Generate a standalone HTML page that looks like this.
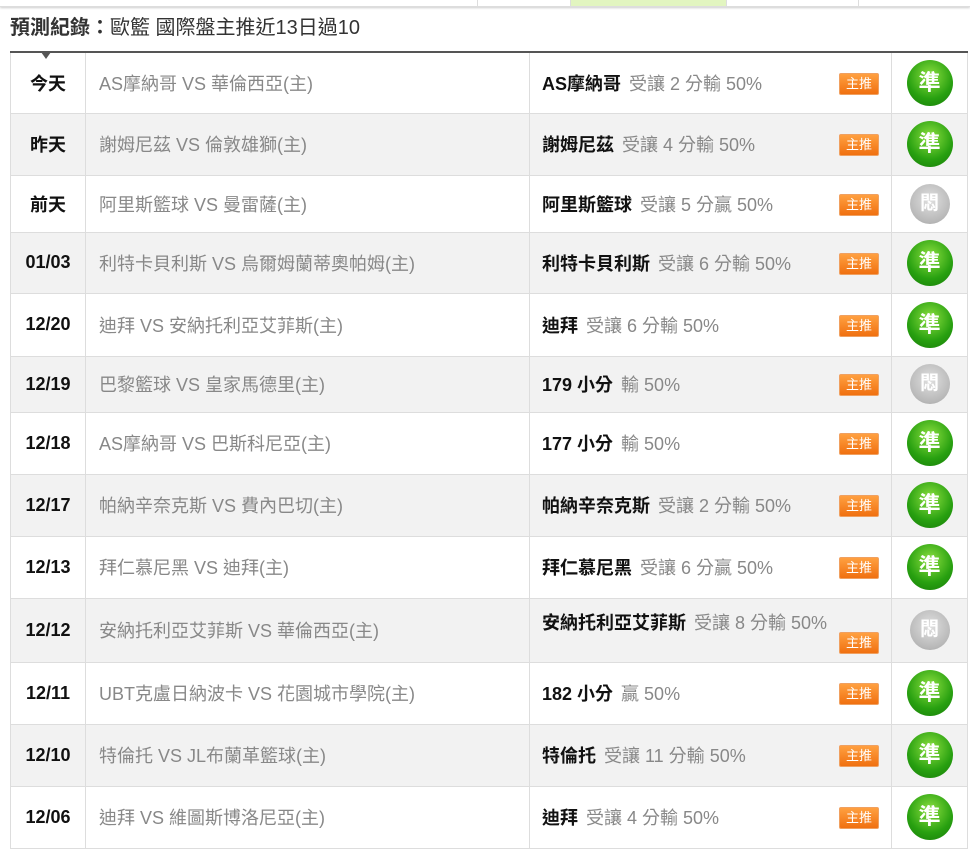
<html><head><style>
body{margin:0;width:970px;height:843px;overflow:hidden;background:#fff;font-family:"Liberation Sans","Noto Sans CJK TC",sans-serif;position:relative}
.top{position:absolute;top:0;left:0;width:970px;height:6px;border-bottom:1px solid #ddd;box-shadow:0 1px 2px #ccc}
.top i{position:absolute;top:0;height:6px;border-left:1px solid #ddd}
h1{position:absolute;left:10px;top:11px;margin:0;font-size:20px;font-weight:normal;color:#333}
h1 b{font-weight:bold}
table{position:absolute;left:10px;top:51px;width:958px;border-collapse:collapse;border-top:2px solid #555}
td{border:1px solid #ddd;padding:0;font-size:18px}
tr:nth-child(even) td{background:#f2f2f2}
td.d{width:74px;text-align:center;font-weight:bold;color:#111}
td.m{width:430px;padding-left:13px;color:#888}
td.p{width:349px;padding-left:12px;color:#888;position:relative}
td.p b{color:#111;margin-right:8px}
td.r{text-align:center}
.t{position:absolute;right:12px;top:50%;margin-top:-10px;width:38px;height:20px;background:linear-gradient(#ffa040,#f07010);border:1px solid #f0a060;border-radius:2px;color:#fff;font-size:13px;line-height:20px;text-align:center}
.g,.s{display:inline-block;border-radius:50%;color:#fff;font-weight:bold;vertical-align:middle}
.g{width:46px;height:46px;line-height:46px;font-size:22px;background:radial-gradient(circle at 50% 35%,#8de040,#28a010 60%,#167a08)}
.s{width:40px;height:40px;line-height:40px;font-size:19px;background:radial-gradient(circle at 50% 40%,#e0e0e0,#b8b8b8 70%,#999)}
.arr{position:absolute;left:41px;top:52px;border:5px solid transparent;border-top:7px solid #555}
</style></head><body>
<div class="top"><i style="left:477px"></i><i style="left:570px;width:155px;background:#e2f5c0;border-right:1px solid #ddd"></i><i style="left:858px"></i></div>
<h1><b>預測紀錄：</b>歐籃 國際盤主推近13日過10</h1>
<table>
<tr style="height:61px"><td class="d">今天</td><td class="m">AS摩納哥 VS 華倫西亞(主)</td><td class="p"><b>AS摩納哥</b>受讓 2 分輸 50%<span class="t">主推</span></td><td class="r"><span class="g">準</span></td></tr>
<tr style="height:62px"><td class="d">昨天</td><td class="m">謝姆尼茲 VS 倫敦雄獅(主)</td><td class="p"><b>謝姆尼茲</b>受讓 4 分輸 50%<span class="t">主推</span></td><td class="r"><span class="g">準</span></td></tr>
<tr style="height:57px"><td class="d">前天</td><td class="m">阿里斯籃球 VS 曼雷薩(主)</td><td class="p"><b>阿里斯籃球</b>受讓 5 分贏 50%<span class="t">主推</span></td><td class="r"><span class="s">悶</span></td></tr>
<tr style="height:61px"><td class="d">01/03</td><td class="m">利特卡貝利斯 VS 烏爾姆蘭蒂奧帕姆(主)</td><td class="p"><b>利特卡貝利斯</b>受讓 6 分輸 50%<span class="t">主推</span></td><td class="r"><span class="g">準</span></td></tr>
<tr style="height:63px"><td class="d">12/20</td><td class="m">迪拜 VS 安納托利亞艾菲斯(主)</td><td class="p"><b>迪拜</b>受讓 6 分輸 50%<span class="t">主推</span></td><td class="r"><span class="g">準</span></td></tr>
<tr style="height:56px"><td class="d">12/19</td><td class="m">巴黎籃球 VS 皇家馬德里(主)</td><td class="p"><b>179 小分</b>輸 50%<span class="t">主推</span></td><td class="r"><span class="s">悶</span></td></tr>
<tr style="height:62px"><td class="d">12/18</td><td class="m">AS摩納哥 VS 巴斯科尼亞(主)</td><td class="p"><b>177 小分</b>輸 50%<span class="t">主推</span></td><td class="r"><span class="g">準</span></td></tr>
<tr style="height:62px"><td class="d">12/17</td><td class="m">帕納辛奈克斯 VS 費內巴切(主)</td><td class="p"><b>帕納辛奈克斯</b>受讓 2 分輸 50%<span class="t">主推</span></td><td class="r"><span class="g">準</span></td></tr>
<tr style="height:62px"><td class="d">12/13</td><td class="m">拜仁慕尼黑 VS 迪拜(主)</td><td class="p"><b>拜仁慕尼黑</b>受讓 6 分贏 50%<span class="t">主推</span></td><td class="r"><span class="g">準</span></td></tr>
<tr style="height:64px"><td class="d">12/12</td><td class="m">安納托利亞艾菲斯 VS 華倫西亞(主)</td><td class="p" style="vertical-align:top;padding-top:10px"><b>安納托利亞艾菲斯</b>受讓 8 分輸 50%<span class="t" style="top:auto;bottom:8px;margin:0">主推</span></td><td class="r"><span class="s">悶</span></td></tr>
<tr style="height:62px"><td class="d">12/11</td><td class="m">UBT克盧日納波卡 VS 花園城市學院(主)</td><td class="p"><b>182 小分</b>贏 50%<span class="t">主推</span></td><td class="r"><span class="g">準</span></td></tr>
<tr style="height:62px"><td class="d">12/10</td><td class="m">特倫托 VS JL布蘭革籃球(主)</td><td class="p"><b>特倫托</b>受讓 11 分輸 50%<span class="t">主推</span></td><td class="r"><span class="g">準</span></td></tr>
<tr style="height:62px"><td class="d">12/06</td><td class="m">迪拜 VS 維圖斯博洛尼亞(主)</td><td class="p"><b>迪拜</b>受讓 4 分輸 50%<span class="t">主推</span></td><td class="r"><span class="g">準</span></td></tr>
</table>
<div class="arr"></div>
</body></html>
